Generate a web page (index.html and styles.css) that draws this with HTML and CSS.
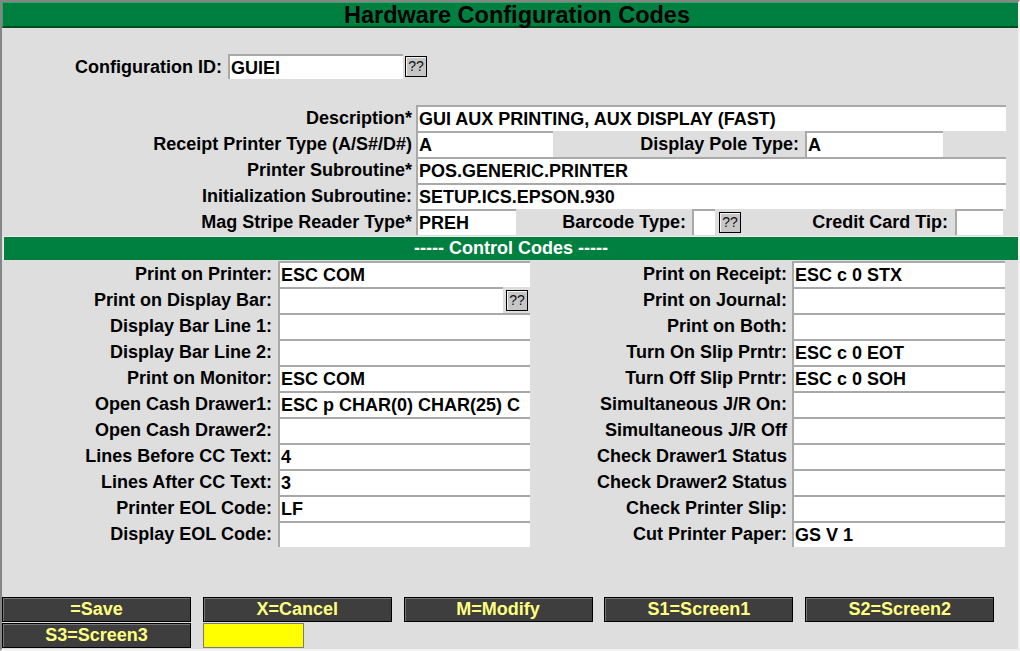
FILE: index.html
```html
<!DOCTYPE html>
<html>
<head>
<meta charset="utf-8">
<title>Hardware Configuration Codes</title>
<link rel="stylesheet" href="styles.css">
</head>
<body>
<div class="screen">
  <div class="title">Hardware Configuration Codes</div>

  <div class="config-row">
    <div class="lbl lbl-config">Configuration ID:</div>
    <div class="fld w-config">GUIEI</div>
    <div class="qq">??</div>
  </div>

  <div class="top-form">
    <div class="row">
      <div class="lbl lbl-top">Description*</div>
      <div class="fld w-wide">GUI AUX PRINTING, AUX DISPLAY (FAST)</div>
    </div>
    <div class="row">
      <div class="lbl lbl-top">Receipt Printer Type (A/S#/D#)</div>
      <div class="fld w-rpt">A</div>
      <div class="lbl lbl-pole">Display Pole Type:</div>
      <div class="fld w-pole">A</div>
    </div>
    <div class="row">
      <div class="lbl lbl-top">Printer Subroutine*</div>
      <div class="fld w-wide">POS.GENERIC.PRINTER</div>
    </div>
    <div class="row">
      <div class="lbl lbl-top">Initialization Subroutine:</div>
      <div class="fld w-wide">SETUP.ICS.EPSON.930</div>
    </div>
    <div class="row">
      <div class="lbl lbl-top">Mag Stripe Reader Type*</div>
      <div class="fld w-mag">PREH</div>
      <div class="lbl lbl-bar">Barcode Type:</div>
      <div class="fld w-bar"></div>
      <div class="qq qq-bar">??</div>
      <div class="lbl lbl-tip">Credit Card Tip:</div>
      <div class="fld w-tip"></div>
    </div>
  </div>

  <div class="section-head">----- Control Codes -----</div>

  <div class="codes">
    <div class="row">
      <div class="lbl lbl-l">Print on Printer:</div>
      <div class="fld w-l">ESC COM</div>
      <div class="lbl lbl-r">Print on Receipt:</div>
      <div class="fld w-r">ESC c 0 STX</div>
    </div>
    <div class="row">
      <div class="lbl lbl-l">Print on Display Bar:</div>
      <div class="fld-group w-l">
        <div class="fld w-disp"></div>
        <div class="qq qq-disp">??</div>
      </div>
      <div class="lbl lbl-r">Print on Journal:</div>
      <div class="fld w-r"></div>
    </div>
    <div class="row">
      <div class="lbl lbl-l">Display Bar Line 1:</div>
      <div class="fld w-l"></div>
      <div class="lbl lbl-r">Print on Both:</div>
      <div class="fld w-r"></div>
    </div>
    <div class="row">
      <div class="lbl lbl-l">Display Bar Line 2:</div>
      <div class="fld w-l"></div>
      <div class="lbl lbl-r">Turn On Slip Prntr:</div>
      <div class="fld w-r">ESC c 0 EOT</div>
    </div>
    <div class="row">
      <div class="lbl lbl-l">Print on Monitor:</div>
      <div class="fld w-l">ESC COM</div>
      <div class="lbl lbl-r">Turn Off Slip Prntr:</div>
      <div class="fld w-r">ESC c 0 SOH</div>
    </div>
    <div class="row">
      <div class="lbl lbl-l">Open Cash Drawer1:</div>
      <div class="fld w-l">ESC p CHAR(0) CHAR(25) C</div>
      <div class="lbl lbl-r">Simultaneous J/R On:</div>
      <div class="fld w-r"></div>
    </div>
    <div class="row">
      <div class="lbl lbl-l">Open Cash Drawer2:</div>
      <div class="fld w-l"></div>
      <div class="lbl lbl-r">Simultaneous J/R Off</div>
      <div class="fld w-r"></div>
    </div>
    <div class="row">
      <div class="lbl lbl-l">Lines Before CC Text:</div>
      <div class="fld w-l">4</div>
      <div class="lbl lbl-r">Check Drawer1 Status</div>
      <div class="fld w-r"></div>
    </div>
    <div class="row">
      <div class="lbl lbl-l">Lines After CC Text:</div>
      <div class="fld w-l">3</div>
      <div class="lbl lbl-r">Check Drawer2 Status</div>
      <div class="fld w-r"></div>
    </div>
    <div class="row">
      <div class="lbl lbl-l">Printer EOL Code:</div>
      <div class="fld w-l">LF</div>
      <div class="lbl lbl-r">Check Printer Slip:</div>
      <div class="fld w-r"></div>
    </div>
    <div class="row">
      <div class="lbl lbl-l">Display EOL Code:</div>
      <div class="fld w-l"></div>
      <div class="lbl lbl-r">Cut Printer Paper:</div>
      <div class="fld w-r">GS V 1</div>
    </div>
  </div>

  <div class="keys">
    <div class="key-row">
      <div class="key">=Save</div>
      <div class="key">X=Cancel</div>
      <div class="key">M=Modify</div>
      <div class="key">S1=Screen1</div>
      <div class="key">S2=Screen2</div>
    </div>
    <div class="key-row">
      <div class="key">S3=Screen3</div>
      <div class="status"></div>
    </div>
  </div>
</div>
</body>
</html>
```

FILE: styles.css
```css
html, body {
  margin: 0;
  padding: 0;
  background: #dedede;
}

.screen {
  box-sizing: border-box;
  width: 1020px;
  height: 651px;
  background: #dedede;
  border-style: solid;
  border-width: 2px;
  border-color: #858585 #f2f2f2 #f2f2f2 #858585;
  font-family: "Liberation Sans", Arial, sans-serif;
  font-weight: bold;
  font-size: 18px;
  color: #000;
  overflow: hidden;
}

.title {
  box-sizing: border-box;
  height: 26px;
  background: #008040;
  border-top: 1px solid #3aa068;
  border-left: 1px solid #3aa068;
  border-bottom: 2px solid #004d1c;
  padding-left: 13px;
  text-align: center;
  font-size: 23.5px;
  line-height: 24px;
  color: #000;
}

.config-row {
  display: flex;
  height: 25px;
  margin-top: 26px;
}

.row {
  display: flex;
  height: 26px;
}

.lbl {
  box-sizing: border-box;
  text-align: right;
  line-height: 26px;
  white-space: nowrap;
}

.fld {
  box-sizing: border-box;
  height: 26px;
  background: #fff;
  border-top: 2px solid #a9a9a9;
  border-left: 2px solid #a9a9a9;
  padding-left: 1px;
  line-height: 24px;
  white-space: nowrap;
  overflow: hidden;
  margin-left: 2px;
}

.config-row .lbl { line-height: 26px; }
.config-row .fld { height: 25px; line-height: 24px; }

.lbl-config { width: 222px; padding-right: 2px; }
.w-config { width: 175px; margin-left: 4px; }

.qq {
  box-sizing: border-box;
  width: 22px;
  height: 21px;
  align-self: center;
  margin-left: 2px;
  background: #c6c6c6;
  border: 1px solid #000;
  box-shadow: inset 1px 1px 0 #f4f4f4;
  font-weight: normal;
  font-size: 14px;
  line-height: 19px;
  text-align: center;
  color: #111;
}

.top-form { margin-top: 26px; }

.lbl-top { width: 412px; padding-right: 2px; }
.w-wide { width: 590px; }
.w-rpt { width: 137px; }
.lbl-pole { width: 250px; padding-right: 4px; }
.w-pole { width: 138px; }
.w-mag { width: 100px; }
.lbl-bar { width: 174px; padding-right: 4px; }
.w-bar { width: 23px; }
.qq-bar { margin-left: 4px; }
.lbl-tip { width: 212px; padding-right: 5px; }
.w-tip { width: 48px; }

.section-head {
  box-sizing: border-box;
  height: 24px;
  margin-top: 1px;
  margin-left: 1px;
  background: #008040;
  border-top: 1px solid #ececec;
  border-left: 1px solid #ececec;
  color: #fff;
  text-align: center;
  line-height: 22px;
}

.codes { margin-top: 1px; }

.lbl-l { width: 274px; padding-right: 4px; }
.w-l { width: 252px; }
.lbl-r { width: 260px; padding-right: 3px; }
.w-r { width: 213px; }

.fld-group {
  display: flex;
  margin-left: 2px;
}
.fld-group .fld { margin-left: 0; }
.w-disp { width: 225px; }
.qq-disp { margin-left: 3px; }

.keys {
  margin-top: 50px;
  display: flex;
  flex-direction: column;
  gap: 1px;
}

.key-row {
  display: flex;
  gap: 11.8px;
}

.key {
  box-sizing: border-box;
  width: 189px;
  height: 25px;
  background: #3e3e3e;
  border: 1px solid #000;
  box-shadow: inset 1px 1px 0 #767676;
  color: #ffff80;
  text-align: center;
  line-height: 23px;
}

.status {
  box-sizing: border-box;
  width: 101px;
  height: 25px;
  background: #ffff00;
  border: 1px solid #7a7a7a;
}
```
